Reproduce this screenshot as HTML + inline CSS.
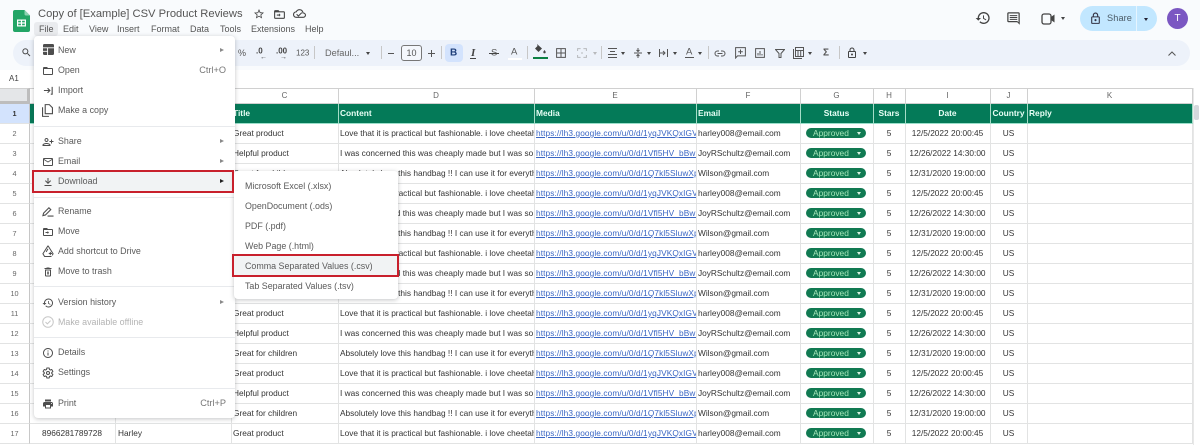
<!DOCTYPE html>
<html><head><meta charset="utf-8"><title>Copy of [Example] CSV Product Reviews</title>
<style>
*{box-sizing:border-box}
html,body{margin:0;padding:0;width:1200px;height:445px;overflow:hidden;background:#f9fbfd;font-family:"Liberation Sans",sans-serif;color:#444}
body{filter:blur(.3px)}
.a{position:absolute;white-space:nowrap}
svg.i{position:absolute;fill:#444;overflow:visible}
.tb{font-size:9px;color:#555;transform:translateY(-50%);top:53px}
.sep{position:absolute;top:46px;height:13px;width:1px;background:#c7c7c7}
.dn{position:absolute;width:0;height:0;border-left:2.5px solid transparent;border-right:2.5px solid transparent;border-top:3px solid #444;top:52px}
.mb{position:absolute;top:23px;font-size:9px;color:#555;line-height:12px}
#grid{position:absolute;left:0;top:88px;width:1193px;height:357px;overflow:hidden;background:#fff}
table{border-collapse:separate;border-spacing:0;table-layout:fixed;width:1193px}
td,th{padding:0 2px 0 1px;border-right:1px solid #e2e3e3;border-bottom:1px solid #e2e3e3;overflow:hidden;white-space:nowrap;font-size:8.3px;color:#333;height:20px;font-weight:normal;line-height:19px}
tr.ch td{height:16px;font-size:8px;text-align:center;color:#666;border-top:1px solid #d0d0d0;line-height:14px;border-right:1px solid #d0d0d0;border-bottom:1px solid #d0d0d0}
th{background:#047a58;color:#e8fff6;font-weight:bold;text-align:left;border-right:1px solid #a5dcc7;border-bottom:1px solid #9adfca;font-size:8.4px;padding:0 2px 0 1px}
td.r{background:#fff;text-align:center;font-size:7.3px;color:#666;padding:0;border-right:1px solid #c8c8c8}
.c{text-align:center}
td a{color:#3a66c4;text-decoration:underline;letter-spacing:.1px}
.p{display:block;position:relative;top:-.5px;width:60px;height:10px;margin-left:4px;border-radius:5px;background:#117a52;color:#a4e6b9;font-size:8.4px;line-height:10px;padding-left:7px}
.p:after{content:"";position:absolute;right:5px;top:3.5px;border-left:2.5px solid transparent;border-right:2.5px solid transparent;border-top:3px solid #d8f5e2}
.menu{position:absolute;background:#fff;border-radius:4px;box-shadow:0 1px 5px rgba(60,64,67,.3)}
.m{position:absolute;left:24px;margin-top:.3px;font-size:8.9px;color:#5a5a5a;line-height:12px;white-space:nowrap}
.s{position:absolute;left:0;width:201px;height:1px;background:#e8eaed}
.tr{position:absolute;left:186px;border-top:2.5px solid transparent;border-bottom:2.5px solid transparent;border-left:4px solid #8a8a8a}
.k{position:absolute;right:9px;margin-top:.3px;font-size:9.2px;color:#777;line-height:12px}
.mi{position:absolute;left:8px;width:12px;height:12px;margin-top:.5px;fill:#4d4d4d;overflow:visible}
.n{position:absolute;left:11px;margin-top:.5px;font-size:8.9px;color:#5a5a5a;line-height:12px;white-space:nowrap}
</style></head><body>
<svg width="0" height="0" style="position:absolute"><defs>
<symbol id="star" viewBox="0 0 24 24"><path d="M22 9.24l-7.19-.62L12 2 9.19 8.63 2 9.24l5.46 4.73L5.82 21 12 17.27 18.18 21l-1.63-7.03L22 9.24zM12 15.4l-3.76 2.27 1-4.28-3.32-2.88 4.38-.38L12 6.1l1.71 4.04 4.38.38-3.32 2.88 1 4.28L12 15.4z"/></symbol>
<symbol id="folder" viewBox="0 0 24 24"><path d="M20 6h-8l-2-2H4c-1.1 0-2 .9-2 2v12c0 1.1.9 2 2 2h16c1.1 0 2-.9 2-2V8c0-1.1-.9-2-2-2zm0 12H4V8h16v10z"/></symbol>
<symbol id="fmove" viewBox="0 0 24 24"><path d="M20 6h-8l-2-2H4c-1.1 0-2 .9-2 2v12c0 1.1.9 2 2 2h16c1.1 0 2-.9 2-2V8c0-1.1-.9-2-2-2zm0 12H4V8h16v10zM11 10l3 3-3 3v-2H7v-2h4v-2z"/></symbol>
<symbol id="cloud" viewBox="0 0 24 24"><path d="M19.35 10.04C18.67 6.59 15.64 4 12 4 9.11 4 6.6 5.64 5.35 8.04 2.34 8.36 0 10.91 0 14c0 3.31 2.69 6 6 6h13c2.76 0 5-2.24 5-5 0-2.64-2.05-4.78-4.65-4.96zM19 18H6c-2.21 0-4-1.79-4-4s1.79-4 4-4h.71C7.37 7.69 9.48 6 12 6c3.04 0 5.5 2.46 5.5 5.5v.5H19c1.66 0 3 1.34 3 3s-1.34 3-3 3zM10 15.2l-2.6-2.6L6 14l4 4 7-7-1.4-1.4z"/></symbol>
<symbol id="search" viewBox="0 0 24 24"><path d="M15.5 14h-.79l-.28-.27C15.41 12.59 16 11.11 16 9.5 16 5.91 13.09 3 9.5 3S3 5.91 3 9.5 5.91 16 9.5 16c1.61 0 3.09-.59 4.23-1.57l.27.28v.79l5 4.99L20.49 19l-4.99-5zm-6 0C7.01 14 5 11.99 5 9.5S7.01 5 9.5 5 14 7.01 14 9.5 11.99 14 9.5 14z"/></symbol>
<symbol id="hist" viewBox="0 0 24 24"><path d="M13 3c-4.97 0-9 4.03-9 9H1l3.89 3.89.07.14L9 12H6c0-3.87 3.13-7 7-7s7 3.13 7 7-3.13 7-7 7c-1.93 0-3.68-.79-4.94-2.06l-1.42 1.42C8.27 19.99 10.51 21 13 21c4.97 0 9-4.03 9-9s-4.03-9-9-9zm-1 5v5l4.28 2.54.72-1.21-3.5-2.08V8H12z"/></symbol>
<symbol id="cmt" viewBox="0 0 24 24"><path d="M4 2h16c1.1 0 2 .9 2 2v18l-4-4H4c-1.1 0-2-.9-2-2V4c0-1.1.9-2 2-2zm0 14h14l2 2V4H4v12zM6 6.5h12v1.6H6zM6 9.5h12v1.6H6zM6 12.5h12v1.6H6z"/></symbol>
<symbol id="lock" viewBox="0 0 24 24"><path d="M18 8h-1V6c0-2.76-2.24-5-5-5S7 3.24 7 6v2H6c-1.1 0-2 .9-2 2v10c0 1.1.9 2 2 2h12c1.1 0 2-.9 2-2V10c0-1.1-.9-2-2-2zM9 6c0-1.66 1.34-3 3-3s3 1.34 3 3v2H9V6zm9 14H6V10h12v10zm-6-3c1.1 0 2-.9 2-2s-.9-2-2-2-2 .9-2 2 .9 2 2 2z"/></symbol>
<symbol id="person" viewBox="0 0 24 24"><path d="M9 12c2.21 0 4-1.79 4-4s-1.79-4-4-4-4 1.79-4 4 1.79 4 4 4zm0-6c1.1 0 2 .9 2 2s-.9 2-2 2-2-.9-2-2 .9-2 2-2zm0 8c-2.67 0-8 1.34-8 4v2h16v-2c0-2.66-5.33-4-8-4zm-6 4c.2-.7 3.3-2 6-2s5.8 1.3 6 2H3zM20 10V7h-2v3h-3v2h3v3h2v-3h3v-2z"/></symbol>
<symbol id="mail" viewBox="0 0 24 24"><path d="M20 4H4c-1.1 0-2 .9-2 2v12c0 1.1.9 2 2 2h16c1.1 0 2-.9 2-2V6c0-1.1-.9-2-2-2zm0 14H4V8l8 5 8-5v10zm-8-7L4 6h16l-8 5z"/></symbol>
<symbol id="dl" viewBox="0 0 24 24"><path d="M5 20h14v-2H5v2zM13 4h-2v8.200L7.400 8.600 6 10l6 6 6-6-1.400-1.400-3.600 3.600V4z"/></symbol>
<symbol id="del" viewBox="0 0 24 24"><path d="M6 19c0 1.1.9 2 2 2h8c1.1 0 2-.9 2-2V7H6v12zM8 9h8v10H8V9zm7.500-5l-1-1h-5l-1 1H5v2h14V4zM10 11h1.500v6H10zM12.500 11H14v6h-1.500z"/></symbol>
<symbol id="info" viewBox="0 0 24 24"><path d="M11 7h2v2h-2zm0 4h2v6h-2zm1-9C6.48 2 2 6.48 2 12s4.48 10 10 10 10-4.48 10-10S17.52 2 12 2zm0 18c-4.41 0-8-3.59-8-8s3.59-8 8-8 8 3.59 8 8-3.59 8-8 8z"/></symbol>
<symbol id="print" viewBox="0 0 24 24"><path d="M19 8H5c-1.66 0-3 1.34-3 3v6h4v4h12v-4h4v-6c0-1.66-1.34-3-3-3zm-3 11H8v-5h8v5zm3-7c-.55 0-1-.45-1-1s.45-1 1-1 1 .45 1 1-.45 1-1 1zm-1-9H6v4h12V3z"/></symbol>
<symbol id="gear" viewBox="0 0 24 24"><path fill="none" stroke="#4d4d4d" stroke-width="2" d="M19.43 12.98c.04-.32.07-.64.07-.98s-.03-.66-.07-.98l2.11-1.65c.19-.15.24-.42.12-.64l-2-3.46c-.12-.22-.39-.3-.61-.22l-2.49 1c-.52-.4-1.08-.73-1.69-.98l-.38-2.65C14.46 2.18 14.25 2 14 2h-4c-.25 0-.46.18-.49.42l-.38 2.65c-.61.25-1.17.59-1.69.98l-2.49-1c-.23-.09-.49 0-.61.22l-2 3.46c-.13.22-.07.49.12.64l2.11 1.65c-.04.32-.07.65-.07.98s.03.66.07.98l-2.11 1.65c-.19.15-.24.42-.12.64l2 3.46c.12.22.39.3.61.22l2.49-1c.52.4 1.08.73 1.69.98l.38 2.65c.03.24.24.42.49.42h4c.25 0 .46-.18.49-.42l.38-2.65c.61-.25 1.17-.59 1.69-.98l2.49 1c.23.09.49 0 .61-.22l2-3.46c.12-.22.07-.49-.12-.64l-2.11-1.65z"/><circle cx="12" cy="12" r="3" fill="none" stroke="#4d4d4d" stroke-width="2"/></symbol>
</defs></svg>

<!-- title area -->
<svg class="a" style="left:13px;top:10px" width="17" height="22" viewBox="0 0 17 22"><path d="M2 0h9.500L17 5.500V20a2 2 0 0 1-2 2H2a2 2 0 0 1-2-2V2a2 2 0 0 1 2-2z" fill="#23a566"/><path d="M11.500 0L17 5.500h-4a1.500 1.500 0 0 1-1.500-1.500z" fill="#8ed1b1"/><path d="M4 9.500h9v7H4zM5.200 10.700v1.700h2.700v-1.700zm3.900 0v1.700h2.700v-1.700zM5.200 13.600v1.700h2.700v-1.700zm3.900 0v1.700h2.700v-1.700z" fill="#fff" fill-rule="evenodd"/></svg>
<div class="a" style="left:38px;top:6px;font-size:11.2px;line-height:16px;color:#555">Copy of [Example] CSV Product Reviews</div>
<svg class="i" style="left:253px;top:8px" width="12" height="12"><use href="#star"/></svg>
<svg class="i" style="left:273px;top:8px" width="13" height="13"><use href="#fmove"/></svg>
<svg class="i" style="left:293px;top:7px" width="13" height="13"><use href="#cloud"/></svg>
<div class="a" style="left:34px;top:22px;width:24px;height:14px;background:#e9ebee;border-radius:3px"></div>
<div class="mb" style="left:39px">File</div><div class="mb" style="left:63px">Edit</div><div class="mb" style="left:89px">View</div><div class="mb" style="left:117px">Insert</div><div class="mb" style="left:151px">Format</div><div class="mb" style="left:190px">Data</div><div class="mb" style="left:220px">Tools</div><div class="mb" style="left:251px">Extensions</div><div class="mb" style="left:305px">Help</div>

<!-- top right -->
<svg class="i" style="left:975px;top:10px" width="16" height="16"><use href="#hist"/></svg>
<svg class="i" style="left:1006px;top:11px" width="15" height="15"><use href="#cmt"/></svg>
<svg class="a" style="left:1041px;top:12px" width="15" height="13" viewBox="0 0 15 13"><rect x="1" y="2" width="9" height="10" rx="2" fill="none" stroke="#444" stroke-width="1.300"/><path d="M10 5l3.500-2.500v8L10 8z" fill="#444"/></svg>
<div class="dn" style="left:1061px;top:17px"></div>
<div class="a" style="left:1080px;top:6px;width:77px;height:25px;border-radius:13px;background:#c2e7ff"></div>
<div class="a" style="left:1136px;top:6px;width:1px;height:25px;background:#e6f5ff"></div>
<svg class="i" style="left:1089px;top:12px;fill:#334" width="13" height="13"><use href="#lock"/></svg>
<div class="a" style="left:1107px;top:12px;font-size:9.2px;line-height:13px;color:#4a5a66;letter-spacing:.1px">Share</div>
<div class="dn" style="left:1144px;top:18px;border-top-color:#223"></div>
<div class="a" style="left:1167px;top:8px;width:21px;height:21px;border-radius:50%;background:#7b57c2;color:#fff;font-size:10px;line-height:21px;text-align:center">T</div>

<!-- toolbar -->
<div class="a" style="left:13px;top:40px;width:1177px;height:26px;border-radius:13px;background:#edf2fa"></div>
<svg class="i" style="left:21px;top:47px" width="11" height="11"><use href="#search"/></svg>
<div class="a tb" style="left:238px">%</div>
<div class="a tb" style="left:256px;color:#444;font-weight:bold;font-size:8px;top:51px">.0</div><div class="a" style="left:260px;top:55px;font-size:7px;color:#444;line-height:6px">←</div>
<div class="a tb" style="left:276px;color:#444;font-weight:bold;font-size:8px;top:51px">.00</div><div class="a" style="left:280px;top:55px;font-size:7px;color:#444;line-height:6px">→</div>
<div class="a tb" style="left:296px;font-size:8px">123</div>
<div class="sep" style="left:314px"></div>
<div class="a tb" style="left:325px;font-size:9.2px;color:#666">Defaul...</div><div class="dn" style="left:366px"></div>
<div class="sep" style="left:381px"></div>
<div class="a" style="left:388px;top:52.500px;width:6px;height:1.200px;background:#555"></div>
<div class="a" style="left:401px;top:45px;width:21px;height:16px;border:1px solid #777;border-radius:3px;background:#f4f7fc;font-size:9px;line-height:14px;text-align:center;color:#555">10</div>
<div class="a" style="left:428px;top:52.500px;width:7px;height:1.200px;background:#555"></div><div class="a" style="left:431px;top:50px;width:1.200px;height:7px;background:#555"></div>
<div class="sep" style="left:441px"></div>
<div class="a" style="left:445px;top:44px;width:18px;height:18px;border-radius:4px;background:#d3e3fd"></div>
<div class="a tb" style="left:450px;font-size:10px;font-weight:bold;color:#1f3f7a">B</div>
<div class="a tb" style="left:471px;font-family:'Liberation Serif',serif;font-style:italic;font-size:11px;font-weight:bold;color:#444">I</div><div class="a" style="left:470px;top:58px;width:6px;height:1px;background:#444"></div>
<div class="a tb" style="left:491px;font-size:9.500px;color:#555">S</div><div class="a" style="left:489px;top:53px;width:10px;height:1px;background:#444"></div>
<div class="a tb" style="left:511px;font-size:9.500px;top:51.500px;color:#555">A</div><div class="a" style="left:508px;top:58px;width:14px;height:1.500px;background:#fff"></div>
<div class="sep" style="left:527px"></div>
<svg class="a" style="left:534px;top:44px" width="13" height="10" viewBox="0 0 13 10"><path d="M3 0l5 4.500-3.500 3.500L1 4.500 3.500 2zM10.500 6c.8 1 1.200 1.700 1.200 2.200a1.200 1.200 0 0 1-2.400 0c0-.5.400-1.200 1.200-2.200z" fill="#444"/></svg>
<div class="a" style="left:533px;top:56.500px;width:15px;height:2.500px;background:#0b8043"></div>
<svg class="a" style="left:556px;top:48px" width="10" height="10" viewBox="0 0 10 10"><path d="M.6.600h8.800v8.800H.6zM5 .6v8.800M.6 5h8.800" fill="none" stroke="#555" stroke-width="1"/></svg>
<svg class="a" style="left:577px;top:48px" width="10" height="10" viewBox="0 0 10 10"><path d="M.6 3V.6h3M6.400.6h3V3M.6 7v2.400h3M6.400 9.400h3V7M4 5h2" fill="none" stroke="#b7b9bc" stroke-width="1"/></svg>
<div class="dn" style="left:593px;border-top-color:#b7b9bc"></div>
<div class="sep" style="left:601px"></div>
<svg class="a" style="left:608px;top:48px" width="9" height="10" viewBox="0 0 9 10"><path d="M0 .5h9M2 3.500h5M0 6.500h9M0 9.500h9" stroke="#555" fill="none"/></svg><div class="dn" style="left:621px"></div>
<svg class="a" style="left:634px;top:48px" width="8" height="10" viewBox="0 0 8 10"><path d="M0 5h8M4 0v3M2.500 2L4 3.500 5.500 2M4 10V7M2.500 8L4 6.500 5.500 8" stroke="#555" fill="none"/></svg><div class="dn" style="left:647px"></div>
<svg class="a" style="left:659px;top:48px" width="9" height="10" viewBox="0 0 9 10"><path d="M.5 1v8M8.500 1v8M1 5h5M4 3l2 2-2 2" stroke="#555" fill="none"/></svg><div class="dn" style="left:673px"></div>
<div class="a tb" style="left:686px;font-size:9.500px;top:51.500px;color:#555">A</div><div class="a" style="left:685px;top:57px;width:9px;height:1px;background:#555"></div><div class="dn" style="left:698px"></div>
<div class="sep" style="left:708px"></div>
<svg class="a" style="left:714px;top:50px" width="12" height="7" viewBox="0 0 12 7"><path d="M5 1H3.500a2.500 2.500 0 0 0 0 5H5M7 1h1.500a2.500 2.500 0 0 1 0 5H7M3.500 3.500h5" fill="none" stroke="#555" stroke-width="1"/></svg>
<svg class="a" style="left:735px;top:47px" width="11" height="12" viewBox="0 0 11 12"><path d="M.6.600h9.800v8.300H2.500L.6 11zM5.500 2.500v4.500M3.200 4.700h4.600" fill="none" stroke="#555" stroke-width="1"/></svg>
<svg class="a" style="left:755px;top:48px" width="10" height="10" viewBox="0 0 10 10"><path d="M.6.600h8.800v8.800H.6zM3 7.500V5M5 7.500V3M7 7.500V6" fill="none" stroke="#555" stroke-width="1"/></svg>
<svg class="a" style="left:775px;top:49px" width="10" height="9" viewBox="0 0 10 9"><path d="M.5.500h9L6 4.500V8.500H4V4.500z" fill="none" stroke="#555" stroke-width="1"/></svg>
<svg class="a" style="left:793px;top:47px" width="11" height="12" viewBox="0 0 11 12"><path d="M.5 2v9.500H9M2.500.5h8v9h-8zM2.500 3.500h8M5 3.500v6M7.700 3.500v6" fill="none" stroke="#555" stroke-width="1"/></svg><div class="dn" style="left:808px"></div>
<div class="a tb" style="left:823px;font-size:10px;font-weight:bold;color:#555">Σ</div>
<div class="sep" style="left:839px"></div>
<svg class="i" style="left:846px;top:47px" width="12" height="12"><use href="#lock"/></svg><div class="dn" style="left:863px"></div>
<svg class="a" style="left:1168px;top:51px" width="8" height="5" viewBox="0 0 8 5"><path d="M.5 4.500L4 1l3.500 3.500" fill="none" stroke="#555" stroke-width="1"/></svg>

<!-- formula bar -->
<div class="a" style="left:0;top:70px;width:1200px;height:18px;background:#fff"></div>
<div class="a" style="left:9px;top:74px;font-size:8px;line-height:10px;color:#444">A1</div>

<!-- grid -->
<div id="grid"><table>
<colgroup><col style="width:30px"><col style="width:86px"><col style="width:116px"><col style="width:107px"><col style="width:196px"><col style="width:162px"><col style="width:104px"><col style="width:73px"><col style="width:32px"><col style="width:85px"><col style="width:37px"><col style="width:165px"></colgroup>
<tr class="ch"><td style="background:#e4e6e8;border-right:3px solid #bdbdbd;border-bottom:3px solid #bdbdbd"></td><td>A</td><td>B</td><td>C</td><td>D</td><td>E</td><td>F</td><td>G</td><td>H</td><td>I</td><td>J</td><td>K</td></tr>
<tr><td class="r" style="background:#d3e3fd;font-weight:bold;color:#333">1</td><th></th><th></th><th>Title</th><th>Content</th><th>Media</th><th>Email</th><th class="c">Status</th><th class="c">Stars</th><th class="c">Date</th><th class="c">Country</th><th>Reply</th></tr>
<tr><td class="r">2</td><td></td><td></td><td>Great product</td><td>Love that it is practical but fashionable. i love cheetah print and style</td><td><a>https://lh3.google.com/u/0/d/1yqJVKQxIGVabcdefg</a></td><td>harley008@email.com</td><td><span class="p">Approved</span></td><td class="c">5</td><td class="c">12/5/2022 20:00:45</td><td class="c">US</td><td></td></tr>
<tr><td class="r">3</td><td></td><td></td><td>Helpful product</td><td>I was concerned this was cheaply made but I was so surprised when it came</td><td><a>https://lh3.google.com/u/0/d/1Vfl5HV_bBwDabcdefg</a></td><td>JoyRSchultz@email.com</td><td><span class="p">Approved</span></td><td class="c">5</td><td class="c">12/26/2022 14:30:00</td><td class="c">US</td><td></td></tr>
<tr><td class="r">4</td><td></td><td></td><td>Great for children</td><td>Absolutely love this handbag !! I can use it for everything and everywhere</td><td><a>https://lh3.google.com/u/0/d/1Q7kl5SluwXpabcdefg</a></td><td>Wilson@gmail.com</td><td><span class="p">Approved</span></td><td class="c">5</td><td class="c">12/31/2020 19:00:00</td><td class="c">US</td><td></td></tr>
<tr><td class="r">5</td><td></td><td></td><td>Great product</td><td>Love that it is practical but fashionable. i love cheetah print and style</td><td><a>https://lh3.google.com/u/0/d/1yqJVKQxIGVabcdefg</a></td><td>harley008@email.com</td><td><span class="p">Approved</span></td><td class="c">5</td><td class="c">12/5/2022 20:00:45</td><td class="c">US</td><td></td></tr>
<tr><td class="r">6</td><td></td><td></td><td>Helpful product</td><td>I was concerned this was cheaply made but I was so surprised when it came</td><td><a>https://lh3.google.com/u/0/d/1Vfl5HV_bBwDabcdefg</a></td><td>JoyRSchultz@email.com</td><td><span class="p">Approved</span></td><td class="c">5</td><td class="c">12/26/2022 14:30:00</td><td class="c">US</td><td></td></tr>
<tr><td class="r">7</td><td></td><td></td><td>Great for children</td><td>Absolutely love this handbag !! I can use it for everything and everywhere</td><td><a>https://lh3.google.com/u/0/d/1Q7kl5SluwXpabcdefg</a></td><td>Wilson@gmail.com</td><td><span class="p">Approved</span></td><td class="c">5</td><td class="c">12/31/2020 19:00:00</td><td class="c">US</td><td></td></tr>
<tr><td class="r">8</td><td></td><td></td><td>Great product</td><td>Love that it is practical but fashionable. i love cheetah print and style</td><td><a>https://lh3.google.com/u/0/d/1yqJVKQxIGVabcdefg</a></td><td>harley008@email.com</td><td><span class="p">Approved</span></td><td class="c">5</td><td class="c">12/5/2022 20:00:45</td><td class="c">US</td><td></td></tr>
<tr><td class="r">9</td><td></td><td></td><td>Helpful product</td><td>I was concerned this was cheaply made but I was so surprised when it came</td><td><a>https://lh3.google.com/u/0/d/1Vfl5HV_bBwDabcdefg</a></td><td>JoyRSchultz@email.com</td><td><span class="p">Approved</span></td><td class="c">5</td><td class="c">12/26/2022 14:30:00</td><td class="c">US</td><td></td></tr>
<tr><td class="r">10</td><td></td><td></td><td>Great for children</td><td>Absolutely love this handbag !! I can use it for everything and everywhere</td><td><a>https://lh3.google.com/u/0/d/1Q7kl5SluwXpabcdefg</a></td><td>Wilson@gmail.com</td><td><span class="p">Approved</span></td><td class="c">5</td><td class="c">12/31/2020 19:00:00</td><td class="c">US</td><td></td></tr>
<tr><td class="r">11</td><td></td><td></td><td>Great product</td><td>Love that it is practical but fashionable. i love cheetah print and style</td><td><a>https://lh3.google.com/u/0/d/1yqJVKQxIGVabcdefg</a></td><td>harley008@email.com</td><td><span class="p">Approved</span></td><td class="c">5</td><td class="c">12/5/2022 20:00:45</td><td class="c">US</td><td></td></tr>
<tr><td class="r">12</td><td></td><td></td><td>Helpful product</td><td>I was concerned this was cheaply made but I was so surprised when it came</td><td><a>https://lh3.google.com/u/0/d/1Vfl5HV_bBwDabcdefg</a></td><td>JoyRSchultz@email.com</td><td><span class="p">Approved</span></td><td class="c">5</td><td class="c">12/26/2022 14:30:00</td><td class="c">US</td><td></td></tr>
<tr><td class="r">13</td><td></td><td></td><td>Great for children</td><td>Absolutely love this handbag !! I can use it for everything and everywhere</td><td><a>https://lh3.google.com/u/0/d/1Q7kl5SluwXpabcdefg</a></td><td>Wilson@gmail.com</td><td><span class="p">Approved</span></td><td class="c">5</td><td class="c">12/31/2020 19:00:00</td><td class="c">US</td><td></td></tr>
<tr><td class="r">14</td><td></td><td></td><td>Great product</td><td>Love that it is practical but fashionable. i love cheetah print and style</td><td><a>https://lh3.google.com/u/0/d/1yqJVKQxIGVabcdefg</a></td><td>harley008@email.com</td><td><span class="p">Approved</span></td><td class="c">5</td><td class="c">12/5/2022 20:00:45</td><td class="c">US</td><td></td></tr>
<tr><td class="r">15</td><td></td><td></td><td>Helpful product</td><td>I was concerned this was cheaply made but I was so surprised when it came</td><td><a>https://lh3.google.com/u/0/d/1Vfl5HV_bBwDabcdefg</a></td><td>JoyRSchultz@email.com</td><td><span class="p">Approved</span></td><td class="c">5</td><td class="c">12/26/2022 14:30:00</td><td class="c">US</td><td></td></tr>
<tr><td class="r">16</td><td></td><td></td><td>Great for children</td><td>Absolutely love this handbag !! I can use it for everything and everywhere</td><td><a>https://lh3.google.com/u/0/d/1Q7kl5SluwXpabcdefg</a></td><td>Wilson@gmail.com</td><td><span class="p">Approved</span></td><td class="c">5</td><td class="c">12/31/2020 19:00:00</td><td class="c">US</td><td></td></tr>
<tr><td class="r">17</td><td style="padding-left:12px">8966281789728</td><td style="padding-left:2px">Harley</td><td>Great product</td><td>Love that it is practical but fashionable. i love cheetah print and style</td><td><a>https://lh3.google.com/u/0/d/1yqJVKQxIGVabcdefg</a></td><td>harley008@email.com</td><td><span class="p">Approved</span></td><td class="c">5</td><td class="c">12/5/2022 20:00:45</td><td class="c">US</td><td></td></tr>
</table></div>
<!-- scrollbar -->
<div class="a" style="left:1193px;top:88px;width:7px;height:357px;background:#fff;border-left:1px solid #e8e8e8"></div>
<div class="a" style="left:1194px;top:105px;width:5px;height:15px;background:#d5d8dc;border-radius:2px"></div>

<!-- file menu -->
<div class="menu" style="left:34px;top:36px;width:201px;height:382px">
<svg class="a" style="left:9px;top:8px" width="11" height="11" viewBox="0 0 12 12"><rect width="12" height="12" rx="1.500" fill="#4d4d4d"/><path d="M0 4.200h12M5 4.200V12M0 8h5" stroke="#fff" stroke-width="1" fill="none"/></svg>
<div class="m" style="top:8px">New</div><div class="tr" style="top:11.500px"></div>
<svg class="mi" style="top:28px"><use href="#folder"/></svg>
<div class="m" style="top:28px">Open</div><div class="k" style="top:28px">Ctrl+O</div>
<svg class="a" style="left:9px;top:49px" width="11" height="11" viewBox="0 0 12 12"><path d="M1 6h6M5 3.500L7.500 6 5 8.500M10 2v8h-1.500" fill="none" stroke="#4d4d4d" stroke-width="1.200"/></svg>
<div class="m" style="top:48px">Import</div>
<svg class="a" style="left:8px;top:68px" width="11" height="13" viewBox="0 0 12 14"><path d="M3.500.6h4.500l3.400 3.400v6.500h-7.900zM.6 3.500v9.900h7" fill="none" stroke="#4d4d4d" stroke-width="1.200"/></svg>
<div class="m" style="top:68px">Make a copy</div>
<div class="s" style="top:90px"></div>
<svg class="mi" style="top:99px"><use href="#person"/></svg>
<div class="m" style="top:99px">Share</div><div class="tr" style="top:102.500px"></div>
<svg class="mi" style="top:119px"><use href="#mail"/></svg>
<div class="m" style="top:119px">Email</div><div class="tr" style="top:122.500px"></div>
<div class="a" style="left:0;top:135px;width:199px;height:21px;background:#f1f3f4"></div>
<svg class="mi" style="top:139px"><use href="#dl"/></svg>
<div class="m" style="top:139px">Download</div><div class="tr" style="top:142.500px;border-left-color:#222"></div>
<div class="s" style="top:161px"></div>
<svg class="a" style="left:8px;top:169px" width="12" height="12" viewBox="0 0 13 13"><path d="M1 11.500l.7-2.700L7.500 3l2 2-5.800 5.800zM6 12h6.500" fill="none" stroke="#4d4d4d" stroke-width="1.200"/></svg>
<div class="m" style="top:169px">Rename</div>
<svg class="mi" style="top:189px"><use href="#fmove"/></svg>
<div class="m" style="top:189px">Move</div>
<svg class="a" style="left:8px;top:209px" width="12" height="12" viewBox="0 0 13 13"><path d="M6.500.8L1 9.500l1.800 2.900h7.500M6.500.8l5.500 8.700-1 1.700M4.500 7.500l2-3.500M9 7.500v3.500M7.300 9.200h3.500" fill="none" stroke="#4d4d4d" stroke-width="1.100"/></svg>
<div class="m" style="top:209px">Add shortcut to Drive</div>
<svg class="mi" style="top:229px"><use href="#del"/></svg>
<div class="m" style="top:229px">Move to trash</div>
<div class="s" style="top:250px"></div>
<svg class="mi" style="top:260px"><use href="#hist"/></svg>
<div class="m" style="top:260px">Version history</div><div class="tr" style="top:263.500px"></div>
<svg class="a" style="left:8px;top:280px" width="12" height="12" viewBox="0 0 13 13"><circle cx="6.500" cy="6.500" r="5.700" fill="none" stroke="#c8c8c8" stroke-width="1.100"/><path d="M3.800 6.500l2 2 3.500-3.500" fill="none" stroke="#c8c8c8" stroke-width="1.100"/></svg>
<div class="m" style="top:280px;color:#b4b4b4">Make available offline</div>
<div class="s" style="top:301px"></div>
<svg class="mi" style="top:310.500px"><use href="#info"/></svg>
<div class="m" style="top:310px">Details</div>
<svg class="mi" style="top:330.500px"><use href="#gear"/></svg>
<div class="m" style="top:330px">Settings</div>
<div class="s" style="top:352px"></div>
<svg class="mi" style="top:361px"><use href="#print"/></svg>
<div class="m" style="top:361px">Print</div><div class="k" style="top:361px">Ctrl+P</div>
</div>

<!-- download submenu -->
<div class="menu" style="left:234px;top:171px;width:164px;height:128px">
<div class="n" style="top:8px">Microsoft Excel (.xlsx)</div>
<div class="n" style="top:28px">OpenDocument (.ods)</div>
<div class="n" style="top:48px">PDF (.pdf)</div>
<div class="n" style="top:68px">Web Page (.html)</div>
<div class="a" style="left:0;top:84px;width:164px;height:21px;background:#f1f3f4"></div>
<div class="n" style="top:88px">Comma Separated Values (.csv)</div>
<div class="n" style="top:108px">Tab Separated Values (.tsv)</div>
</div>

<!-- red highlights -->
<div class="a" style="left:32px;top:170px;width:202px;height:23px;border:2px solid #c8202c"></div>
<div class="a" style="left:232px;top:254px;width:167px;height:23px;border:2px solid #c8202c"></div>
</body></html>
